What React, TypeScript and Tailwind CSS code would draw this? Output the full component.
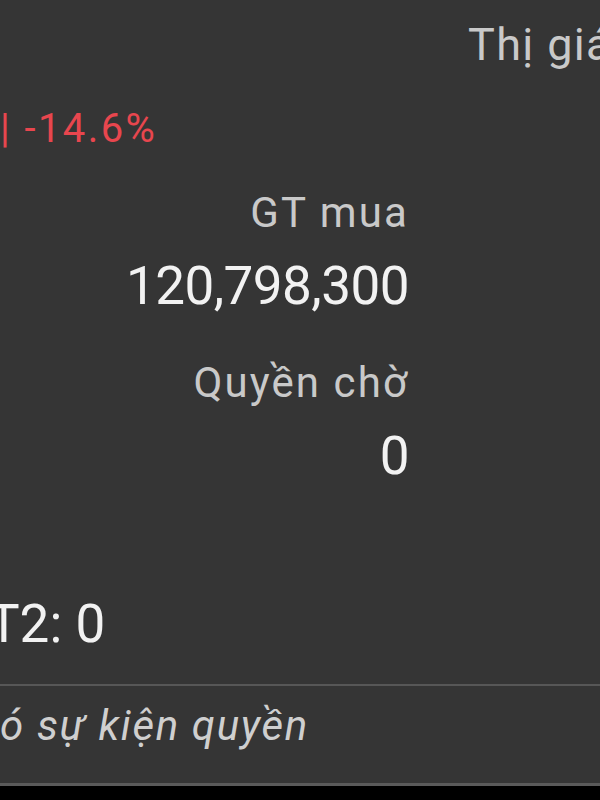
import React from 'react'

const font = { fontFamily: 'Roboto, "Noto Sans", sans-serif' }

function Stat({ label, value, labelGap }: { label: string; value: string; labelGap: string }) {
  return (
    <div className={labelGap}>
      <div className="text-[42px] leading-none tracking-[0.05em] text-[#c9c9c9] whitespace-nowrap">{label}</div>
      <div className="mt-[26px] text-[53px] leading-none tracking-[-0.01em] text-[#f2f2f2] whitespace-nowrap">{value}</div>
    </div>
  )
}

export default function App() {
  return (
    <div className="w-[600px] h-[800px] overflow-hidden bg-[#353535] flex flex-col" style={font}>
      {/* Header row, cut off at the right */}
      <div className="pt-[22px] pl-[468px] text-[45px] leading-none tracking-[0.03em] text-[#c9c9c9] whitespace-nowrap">
        Thị giá
      </div>

      {/* Change, cut off at the left */}
      <div className="mt-[42px] text-[40px] leading-none tracking-[0.06em] text-[#e8464e] whitespace-nowrap">
        | -14.6%
      </div>

      {/* Buy value / pending rights */}
      <div className="mt-[43px] w-[409px] flex flex-col items-end text-right">
        <Stat label="GT mua" value="120,798,300" labelGap="" />
        <Stat label="Quyền chờ" value="0" labelGap="mt-[49px]" />
      </div>

      <div className="mt-[115px] -ml-[12px] text-[53px] leading-none text-[#f2f2f2] whitespace-nowrap">T2: 0</div>

      <div className="mt-[33px] h-[2px] bg-[#575757]" />

      <div className="mt-[19px] text-[42px] leading-none italic tracking-[0.04em] text-[#cfcfcf] whitespace-nowrap">
        ó sự kiện quyền
      </div>

      <div className="mt-[36px] h-[3px] bg-[#5a5a5a]" />
      <div className="flex-1 bg-black" />
    </div>
  )
}
